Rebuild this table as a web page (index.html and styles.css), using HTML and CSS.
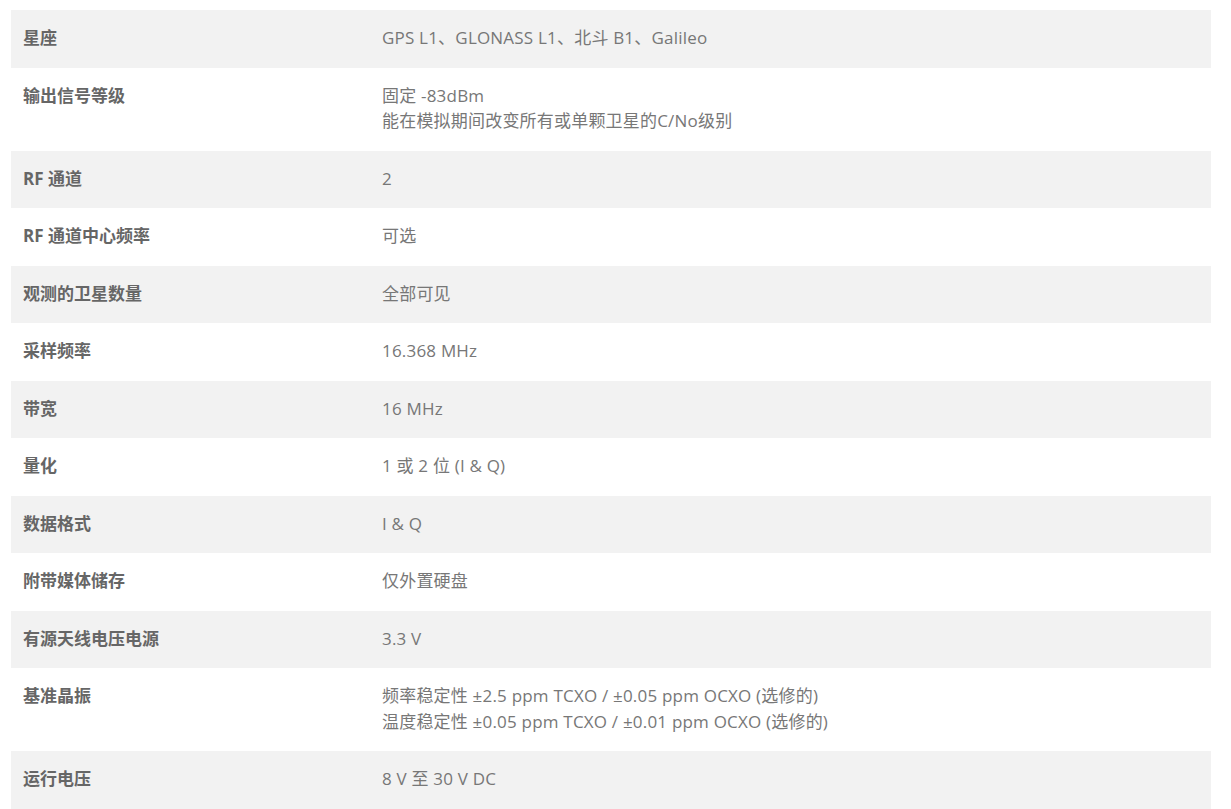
FILE: index.html
```html
<!DOCTYPE html>
<html lang="zh-CN">
<head>
<meta charset="utf-8">
<title>规格</title>
<link rel="stylesheet" href="styles.css">
</head>
<body>
<table class="spec">
  <tbody>
    <tr><th>星座</th><td>GPS L1、GLONASS L1、北斗 B1、Galileo</td></tr>
    <tr><th>输出信号等级</th><td>固定 -83dBm<br>能在模拟期间改变所有或单颗卫星的C/No级别</td></tr>
    <tr><th>RF 通道</th><td>2</td></tr>
    <tr><th>RF 通道中心频率</th><td>可选</td></tr>
    <tr><th>观测的卫星数量</th><td>全部可见</td></tr>
    <tr><th>采样频率</th><td>16.368 MHz</td></tr>
    <tr><th>带宽</th><td>16 MHz</td></tr>
    <tr><th>量化</th><td>1 或 2 位 (I &amp; Q)</td></tr>
    <tr><th>数据格式</th><td>I &amp; Q</td></tr>
    <tr><th>附带媒体储存</th><td>仅外置硬盘</td></tr>
    <tr><th>有源天线电压电源</th><td>3.3 V</td></tr>
    <tr><th>基准晶振</th><td>频率稳定性 ±2.5 ppm TCXO / ±0.05 ppm OCXO (选修的)<br>温度稳定性 ±0.05 ppm TCXO / ±0.01 ppm OCXO (选修的)</td></tr>
    <tr><th>运行电压</th><td>8 V 至 30 V DC</td></tr>
  </tbody>
</table>
</body>
</html>
```
FILE: styles.css
```css
html, body {
  margin: 0;
  padding: 0;
  background: #ffffff;
}
body {
  padding: 10px 20px 0 11px;
  font-family: "Open Sans", "Noto Sans CJK SC", sans-serif;
  font-size: 17px;
  line-height: 25.5px;
}
.spec {
  width: 1200px;
  border-collapse: collapse;
  border-spacing: 0;
}
.spec tr:nth-child(odd) {
  background: #f2f2f2;
}
.spec th,
.spec td {
  padding: 15px 12px 17px;
  text-align: left;
  vertical-align: top;
}
.spec th {
  width: 335px;
  font-weight: 700;
  color: #666666;
}
.spec td {
  font-weight: 400;
  color: #777777;
  letter-spacing: 0.2px;
}
```
